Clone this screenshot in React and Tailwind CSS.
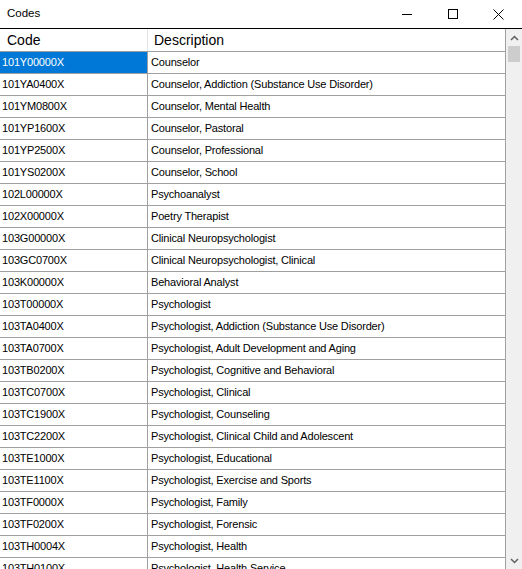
import React from 'react';

// Code lookup window: a plain list grid with the first row selected.
const rows = [
  ['101Y00000X', 'Counselor'],
  ['101YA0400X', 'Counselor, Addiction (Substance Use Disorder)'],
  ['101YM0800X', 'Counselor, Mental Health'],
  ['101YP1600X', 'Counselor, Pastoral'],
  ['101YP2500X', 'Counselor, Professional'],
  ['101YS0200X', 'Counselor, School'],
  ['102L00000X', 'Psychoanalyst'],
  ['102X00000X', 'Poetry Therapist'],
  ['103G00000X', 'Clinical Neuropsychologist'],
  ['103GC0700X', 'Clinical Neuropsychologist, Clinical'],
  ['103K00000X', 'Behavioral Analyst'],
  ['103T00000X', 'Psychologist'],
  ['103TA0400X', 'Psychologist, Addiction (Substance Use Disorder)'],
  ['103TA0700X', 'Psychologist, Adult Development and Aging'],
  ['103TB0200X', 'Psychologist, Cognitive and Behavioral'],
  ['103TC0700X', 'Psychologist, Clinical'],
  ['103TC1900X', 'Psychologist, Counseling'],
  ['103TC2200X', 'Psychologist, Clinical Child and Adolescent'],
  ['103TE1000X', 'Psychologist, Educational'],
  ['103TE1100X', 'Psychologist, Exercise and Sports'],
  ['103TF0000X', 'Psychologist, Family'],
  ['103TF0200X', 'Psychologist, Forensic'],
  ['103TH0004X', 'Psychologist, Health'],
  ['103TH0100X', 'Psychologist, Health Service'],
];

function TitleBar() {
  return (
    <div className="flex h-[29px] shrink-0 items-center border-b border-black bg-white pl-[7px]">
      <span className="flex-1 text-[11.5px] text-black">Codes</span>
      <div className="flex h-full items-center">
        <div className="flex w-[46px] justify-center">
          <svg width="11" height="11" viewBox="0 0 11 11">
            <path d="M0 5.5h10" stroke="#000" strokeWidth="1" />
          </svg>
        </div>
        <div className="flex w-[46px] justify-center">
          <svg width="11" height="11" viewBox="0 0 11 11">
            <rect x="0.5" y="0.5" width="9" height="9" fill="none" stroke="#000" strokeWidth="1" />
          </svg>
        </div>
        <div className="flex w-[46px] justify-center pr-[2px]">
          <svg width="11" height="11" viewBox="0 0 11 11">
            <path d="M0.5 0.5l10 10M10.5 0.5l-10 10" stroke="#000" strokeWidth="1" />
          </svg>
        </div>
      </div>
    </div>
  );
}

function ScrollBar() {
  return (
    <div className="flex w-[16px] flex-col bg-[#f0f0f0]">
      <div className="flex h-[17px] items-center justify-center">
        <svg width="9" height="6" viewBox="0 0 9 6">
          <path d="M1 5l3.5-3.5L8 5" fill="none" stroke="#606060" strokeWidth="1.5" />
        </svg>
      </div>
      <div className="mx-[2px] h-[16px] bg-[#cdcdcd]" />
      <div className="flex-1" />
      <div className="flex h-[17px] items-center justify-center">
        <svg width="9" height="6" viewBox="0 0 9 6">
          <path d="M1 1l3.5 3.5L8 1" fill="none" stroke="#606060" strokeWidth="1.5" />
        </svg>
      </div>
    </div>
  );
}

export default function App() {
  return (
    <div className="flex h-[569px] w-[522px] flex-col overflow-hidden bg-white font-['Liberation_Sans',Arial,sans-serif]">
      <TitleBar />
      <div className="flex min-h-0 flex-1">
        <div className="flex-1 overflow-hidden border-r border-[#a0a0a0]">
          <div className="flex h-[23px] items-center border-b border-[#a0a0a0] text-[14px] text-black">
            <div className="w-[148px] border-r border-[#e5e5e5] pl-[7px] leading-[22px]">Code</div>
            <div className="pl-[6px]">Description</div>
          </div>
          {rows.map(([code, desc], i) => (
            <div key={code} className="flex h-[22px] border-b border-[#a0a0a0] text-[11px] tracking-[-0.18px] text-black">
              <div
                className={
                  i === 0
                    ? 'flex w-[148px] items-center border-r border-[#a0a0a0] bg-[#0078d7] pl-[2px] text-white'
                    : 'flex w-[148px] items-center border-r border-[#a0a0a0] pl-[2px]'
                }
              >
                {code}
              </div>
              <div className="flex flex-1 items-center pl-[3px]">{desc}</div>
            </div>
          ))}
        </div>
        <ScrollBar />
      </div>
    </div>
  );
}
